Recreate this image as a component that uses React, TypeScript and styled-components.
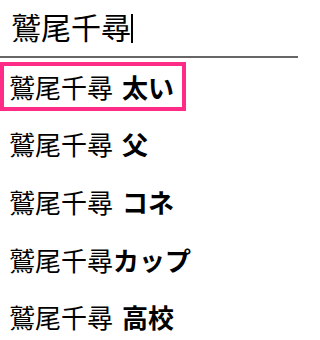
import React from "react";
import styled, { createGlobalStyle } from "styled-components";

const GlobalStyle = createGlobalStyle`
  html, body {
    margin: 0;
    padding: 0;
    background: #ffffff;
  }
  body {
    font-family: "Noto Sans CJK JP", "Noto Sans", sans-serif;
    color: #000000;
  }
`;

const Screen = styled.div`
  width: 298px;
  height: 340px;
  overflow: hidden;
  background: #ffffff;
`;

const SearchField = styled.div`
  height: 58px;
  box-sizing: border-box;
  display: flex;
  align-items: center;
  padding-left: 11px;
  padding-bottom: 4px;
  border-bottom: 2px solid #666666;
  font-size: 30px;
  line-height: 1;
  color: #000000;
`;

const Caret = styled.span`
  display: inline-block;
  width: 2px;
  height: 29px;
  margin-left: 0px;
  margin-top: 4px;
  background: #000000;
`;

const SuggestionList = styled.ul`
  list-style: none;
  margin: 0;
  padding: 0;
`;

const Suggestion = styled.li`
  height: 57.6px;
  display: flex;
  align-items: center;
  font-size: 26px;
  line-height: 1;
  word-spacing: 3px;
`;

const Label = styled.span<{ $selected?: boolean }>`
  box-sizing: border-box;
  height: 49px;
  display: flex;
  align-items: center;
  padding: 0 8px 0 5px;
  border: 4px solid ${(p) => (p.$selected ? "#fe2c86" : "transparent")};
  white-space: pre;
`;

const Query = styled.span`
  font-weight: 400;
`;

const Completion = styled.span`
  font-weight: 700;
`;

const suggestions = [
  { query: "鷲尾千尋", completion: " 太い", selected: true },
  { query: "鷲尾千尋", completion: " 父" },
  { query: "鷲尾千尋", completion: " コネ" },
  { query: "鷲尾千尋", completion: "カップ" },
  { query: "鷲尾千尋", completion: " 高校" },
];

export default function App() {
  return (
    <>
      <GlobalStyle />
      <Screen>
        <SearchField>
          鷲尾千尋
          <Caret />
        </SearchField>
        <SuggestionList>
          {suggestions.map((s, i) => (
            <Suggestion key={i}>
              <Label $selected={s.selected}>
                <Query>{s.query}</Query>
                <Completion>{s.completion}</Completion>
              </Label>
            </Suggestion>
          ))}
        </SuggestionList>
      </Screen>
    </>
  );
}
